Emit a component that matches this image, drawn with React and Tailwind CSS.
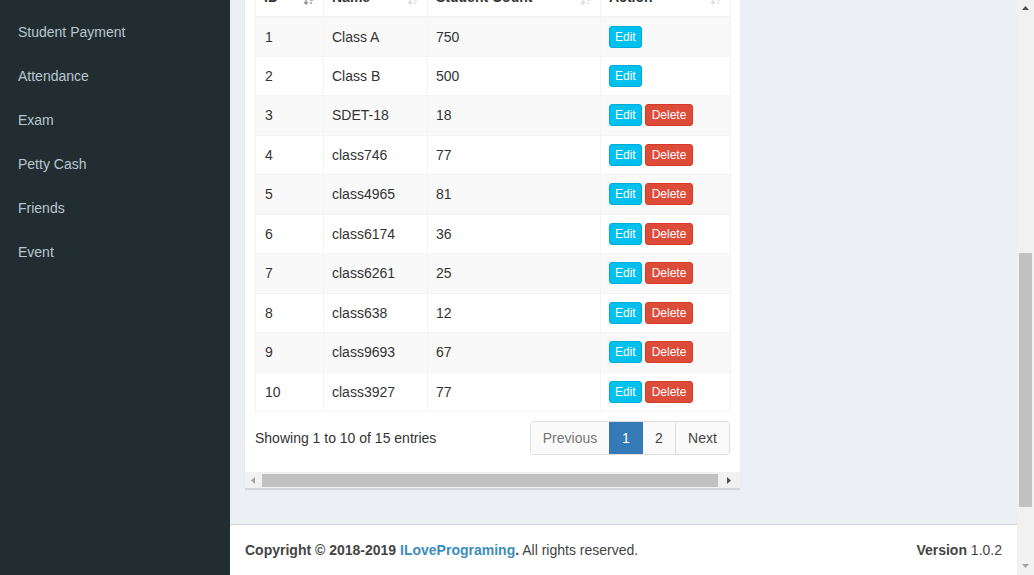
import React from 'react';

const menu = ['Student Payment', 'Attendance', 'Exam', 'Petty Cash', 'Friends', 'Event'];

const rows = [
  { id: 1, name: 'Class A', count: 750, del: false },
  { id: 2, name: 'Class B', count: 500, del: false },
  { id: 3, name: 'SDET-18', count: 18, del: true },
  { id: 4, name: 'class746', count: 77, del: true },
  { id: 5, name: 'class4965', count: 81, del: true },
  { id: 6, name: 'class6174', count: 36, del: true },
  { id: 7, name: 'class6261', count: 25, del: true },
  { id: 8, name: 'class638', count: 12, del: true },
  { id: 9, name: 'class9693', count: 67, del: true },
  { id: 10, name: 'class3927', count: 77, del: true },
];

const SortIcon = ({ active }) => (
  <svg width="12" height="10" viewBox="0 0 12 10" className="absolute right-[8px] bottom-[11px]">
    <path d="M3 1 L3 9 M1 7 L3 9 L5 7" stroke={active ? '#999' : '#ddd'} strokeWidth="1.5" fill="none" />
    <path d="M7 2 H11 M7 5 H10 M7 8 H9" stroke={active ? '#999' : '#ddd'} strokeWidth="1.5" />
  </svg>
);

const App = () => {
  return (
    <div
      className="flex h-[575px] w-[1034px] overflow-hidden text-[14px] text-[#333]"
      style={{ fontFamily: '"Liberation Sans", Arial, sans-serif' }}
    >
      {/* Sidebar */}
      <div className="w-[230px] shrink-0 bg-[#222d32] pt-[10px]">
        {menu.map((item) => (
          <div key={item} className="h-[44px] pl-[18px] py-[12px] leading-[20px] text-[#b8c7ce]">
            {item}
          </div>
        ))}
      </div>

      {/* Main */}
      <div className="flex w-[787px] shrink-0 flex-col bg-[#ecf0f5]">
        <div className="flex-1 overflow-hidden px-[15px]">
          <div className="mt-[-32px] w-[495px] bg-white shadow-[0_1px_1px_rgba(0,0,0,0.1)]">
            <div className="px-[10px] pt-[10px] pb-[17px]">
              <table className="w-[475px] table-fixed border-collapse border border-[#f4f4f4]">
                <thead>
                  <tr className="h-[38px] border-b-2 border-[#f4f4f4]">
                    {[
                      ['ID', 'w-[68px]', true],
                      ['Name', 'w-[104px]', false],
                      ['Student Count', 'w-[173px]', false],
                      ['Action', 'w-[130px]', false],
                    ].map(([t, w, a]) => (
                      <th key={t} className={`${w} relative border border-[#f4f4f4] px-[8px] text-left font-bold leading-[20px]`}>
                        {t}
                        <SortIcon active={a} />
                      </th>
                    ))}
                  </tr>
                </thead>
                <tbody>
                  {rows.map((r, i) => (
                    <tr key={r.id} className={`h-[39.5px] ${i % 2 === 0 ? 'bg-[#f9f9f9]' : 'bg-white'}`}>
                      <td className="border border-[#f4f4f4] px-[9px] leading-[20px]">{r.id}</td>
                      <td className="border border-[#f4f4f4] px-[8px] leading-[20px]">{r.name}</td>
                      <td className="border border-[#f4f4f4] px-[8px] leading-[20px]">{r.count}</td>
                      <td className="border border-[#f4f4f4] px-[8px]">
                        <div className="flex gap-[3px]">
                          <span className="h-[22px] rounded-[3px] border border-[#00acd6] bg-[#00c0ef] px-[5px] text-[12px] leading-[20px] text-white">
                            Edit
                          </span>
                          {r.del && (
                            <span className="h-[22px] rounded-[3px] border border-[#d73925] bg-[#dd4b39] px-[6px] text-[12px] leading-[20px] text-white">
                              Delete
                            </span>
                          )}
                        </div>
                      </td>
                    </tr>
                  ))}
                </tbody>
              </table>

              <div className="mt-[9px] flex items-center justify-between">
                <div className="text-[#333]">Showing 1 to 10 of 15 entries</div>
                <div className="flex h-[34px] overflow-hidden rounded-[4px] border border-[#ddd] leading-[32px]">
                  <span className="w-[78px] bg-[#fafafa] text-center text-[#777]">Previous</span>
                  <span className="w-[34px] bg-[#337ab7] text-center text-white">1</span>
                  <span className="w-[33px] border-r border-[#ddd] bg-[#fafafa] text-center text-[#444]">2</span>
                  <span className="w-[53px] bg-[#fafafa] text-center text-[#444]">Next</span>
                </div>
              </div>
            </div>

            {/* horizontal scrollbar */}
            <div className="flex h-[17px] items-center border-b border-[#d2d6de] bg-[#f1f1f1]">
              <div className="flex w-[17px] justify-center">
                <svg width="5" height="7" viewBox="0 0 5 7"><path d="M4 0 L0 3.5 L4 7 Z" fill="#a3a3a3" /></svg>
              </div>
              <div className="h-[13px] w-[456px] bg-[#c1c1c1]" />
              <div className="flex flex-1 justify-center">
                <svg width="5" height="7" viewBox="0 0 5 7"><path d="M0 0 L4 3.5 L0 7 Z" fill="#505050" /></svg>
              </div>
            </div>
          </div>
        </div>

        {/* Footer */}
        <div className="flex h-[51px] items-center justify-between border-t border-[#d2d6de] bg-white px-[15px] text-[#444]">
          <div>
            <b>Copyright © 2018-2019 </b>
            <b className="text-[#3c8dbc]">ILovePrograming</b>
            <b>.</b> All rights reserved.
          </div>
          <div>
            <b>Version</b> 1.0.2
          </div>
        </div>
      </div>

      {/* vertical scrollbar */}
      <div className="flex w-[17px] shrink-0 flex-col items-center bg-[#f1f1f1]">
        <div className="flex h-[17px] items-center">
          <svg width="7" height="5" viewBox="0 0 7 5"><path d="M0 4 L3.5 0 L7 4 Z" fill="#505050" /></svg>
        </div>
        <div className="mt-[236px] h-[254px] w-[13px] bg-[#c1c1c1]" />
        <div className="mt-auto flex h-[17px] items-center">
          <svg width="7" height="5" viewBox="0 0 7 5"><path d="M0 0 L7 0 L3.5 4 Z" fill="#a3a3a3" /></svg>
        </div>
      </div>
    </div>
  );
};

export default App;
